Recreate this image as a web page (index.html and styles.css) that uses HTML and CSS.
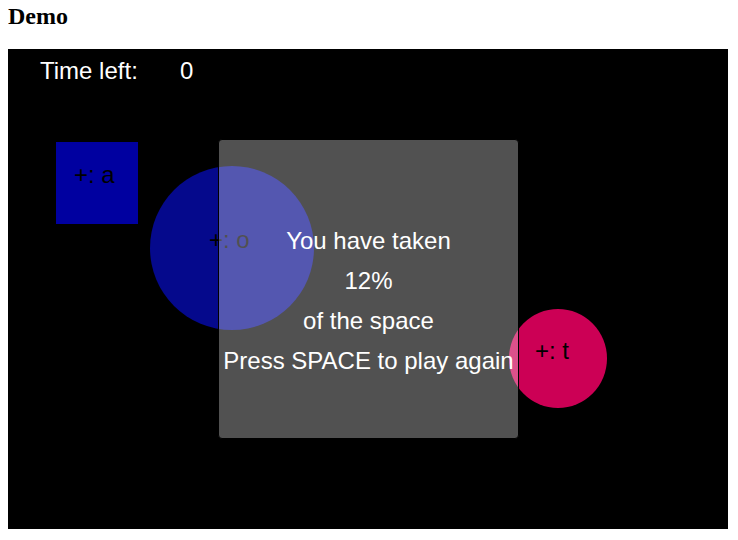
FILE: index.html
```html
<!DOCTYPE html>
<html>
<head>
<meta charset="utf-8">
<title>Demo</title>
<link rel="stylesheet" href="styles.css">
</head>
<body>
<h1 class="title">Demo</h1>
<div class="stage">
  <div class="hud">
    <span class="hud-label">Time left:</span>
    <span class="hud-value">0</span>
  </div>
  <div class="shape square"><span class="shape-label">+: a</span></div>
  <div class="shape circle-blue"><span class="shape-label">+: o</span></div>
  <div class="shape circle-pink"><span class="shape-label">+: t</span></div>
  <div class="overlay">
    <p class="overlay-line">You have taken</p>
    <p class="overlay-line">12%</p>
    <p class="overlay-line">of the space</p>
    <p class="overlay-line">Press SPACE to play again</p>
  </div>
</div>
</body>
</html>
```
FILE: styles.css
```css
html, body {
  background: #ffffff;
}
body {
  margin: 8px;
}
.title {
  margin: 0 0 25px 0;
  font-family: "Liberation Serif", "Times New Roman", serif;
  font-weight: 700;
  font-size: 24px;
  line-height: 16px;
  color: #000;
}
.stage {
  position: relative;
  width: 720px;
  height: 480px;
  background: #000;
  overflow: hidden;
  font-family: "Liberation Sans", Arial, sans-serif;
  font-size: 24px;
}
.hud {
  display: flex;
  padding: 10px 0 0 32px;
  color: #fff;
  line-height: 24px;
}
.hud-label {
  width: 140px;
}
.shape {
  position: absolute;
}
.shape-label {
  position: absolute;
  left: calc(50% - 23px);
  top: calc(50% - 20px);
  font-family: "Liberation Sans", Arial, sans-serif;
  font-size: 24px;
  line-height: 24px;
  white-space: nowrap;
  color: #000;
}
.square {
  left: 48px;
  top: 93px;
  width: 82px;
  height: 82px;
  background: #0000a0;
}
.circle-blue {
  left: 142px;
  top: 117px;
  width: 164px;
  height: 164px;
  border-radius: 50%;
  background: #05098c;
}
.circle-pink {
  left: 501px;
  top: 260px;
  width: 98px;
  height: 99px;
  border-radius: 50%;
  background: #cc0055;
}
.overlay {
  position: absolute;
  left: 210px;
  top: 90px;
  width: 301px;
  height: 300px;
  box-sizing: border-box;
  border: 1px solid #000;
  border-radius: 4px;
  background: rgba(255, 255, 255, 0.318);
  padding-top: 81px;
  display: flex;
  flex-direction: column;
  align-items: center;
  color: #fff;
}
.overlay-line {
  margin: 0;
  line-height: 40px;
  white-space: nowrap;
}
```
